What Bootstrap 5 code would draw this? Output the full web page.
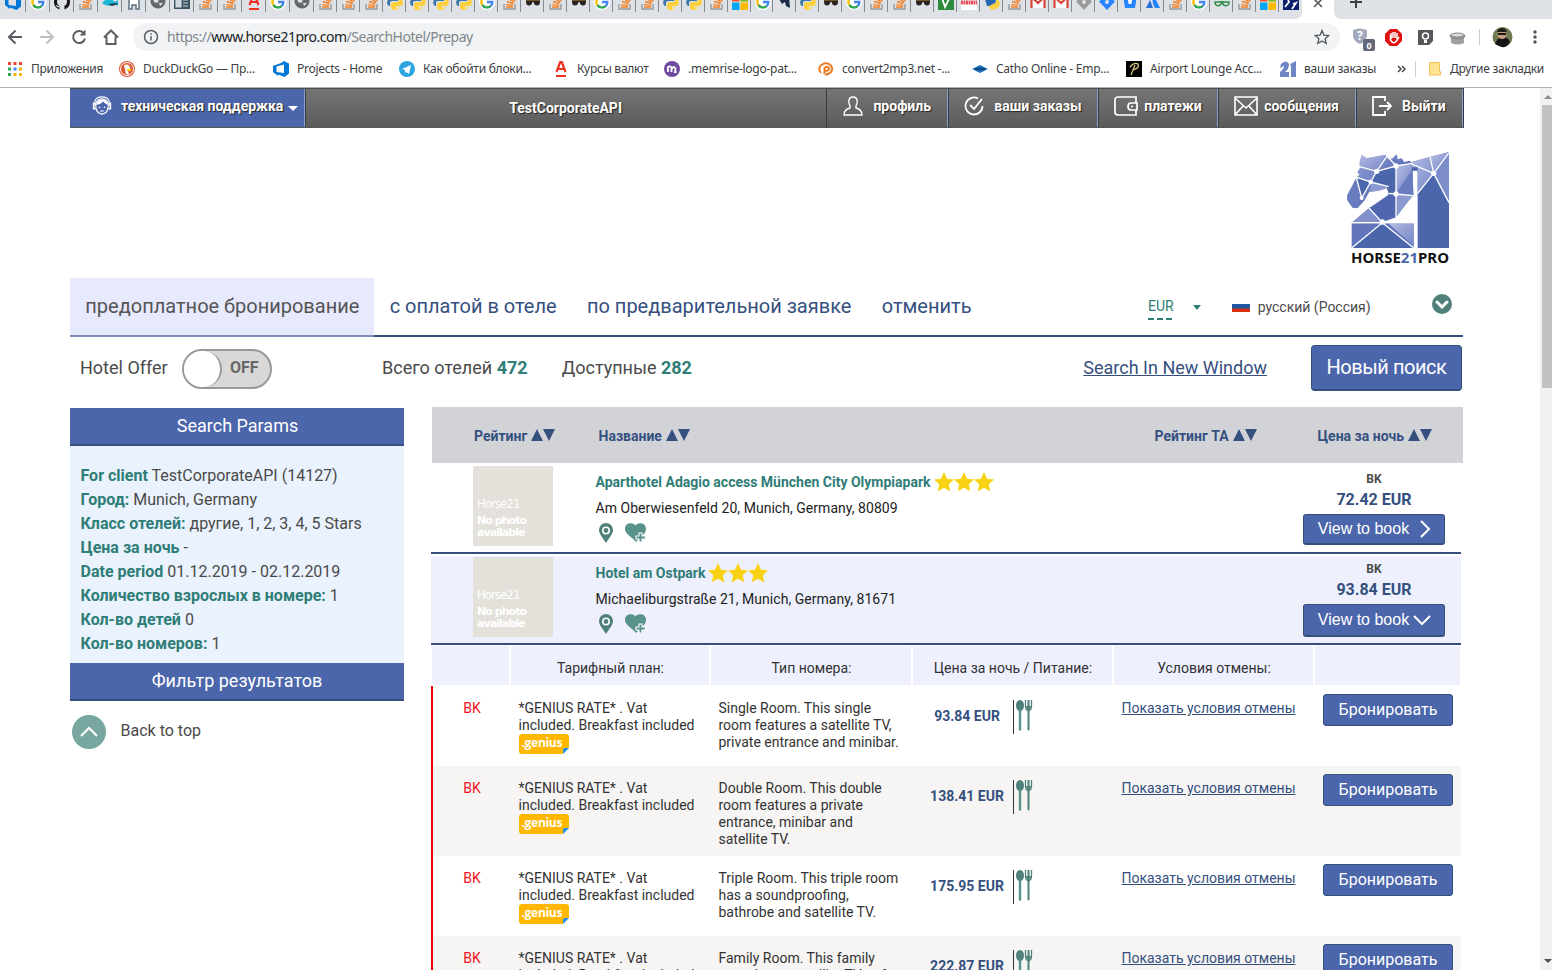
<!DOCTYPE html>
<html lang="ru">
<head>
<meta charset="utf-8">
<title>Horse21Pro</title>
<link href="https://cdn.jsdelivr.net/npm/bootstrap@5.3.0/dist/css/bootstrap.min.css" rel="stylesheet">
<style>
html,body{height:970px;overflow:hidden}
body{font-family:Roboto,"Liberation Sans",sans-serif;font-size:16px;color:#4a4a4a;background:#fff;line-height:24px}
svg{display:block;flex:none}
a{color:#35507f}
/* browser chrome */
.chrome{height:88px;border-bottom:1px solid #b1b2b4;font-family:"Noto Sans","Open Sans",sans-serif;color:#3c4043}
.strip{height:19px;background:#fff;overflow:hidden}
.tabs-bg{width:1302px;background:#dee1e6;border-bottom-right-radius:7px}
.rest-bg{background:#dee1e6;border-bottom-left-radius:7px;padding-left:15px}
.tb{width:23px;height:19px;overflow:hidden}
.tb.w{width:24px}
.tb svg{margin:-6px 0 0 4px}
.tb i{width:1px;height:12px;background:#85888c;margin-left:auto}
.tool{height:37px;padding:0 8px 1px 7px}
.omni{height:28px;width:1207px;border-radius:14px;background:#f1f3f4;margin-left:13px;padding:0 10px;font-size:14px}
.url{color:#80868b;letter-spacing:-.5px;margin-left:8px}
.url b{font-weight:400;color:#202124}
.marks{height:31px;font-size:12px;padding:0 0 5px 7px}
.bm{width:var(--w);gap:8px;white-space:nowrap;letter-spacing:-.26px}
/* page */
.view{height:882px}
.sbar{width:12px;background:#f1f1f1;padding:6px 0 5px 2px}
.thumb{height:283px;background:#c1c1c1;margin-top:5px}
.page-col{width:1393px;margin-left:70px}
.topnav{height:40px;width:1394px;background:linear-gradient(#757575,#5b5b5b);border-top:1px solid #4b4b4b;border-bottom:1px solid #565656;color:#fff;font-weight:700;font-size:14px;text-shadow:1px 1px 1px #222}
.topnav>div{border-right:1px solid #3a3a3a;height:38px}
.topnav span{margin-top:-4px}
.topnav .lit{box-shadow:inset -1px 0 #86a0d8}
.support{width:236px;background:#4c66ac;padding-left:22px}
.caret-d{border:5px solid transparent;border-top-color:#fff;border-bottom:0}
.logo-row{height:150px}
.menu{height:59px;border-bottom:2px solid #35507f;font-size:20px;color:#35507f}
.menu .it{height:59px;padding:0 15px 0 15.3px;line-height:56px;white-space:nowrap}
.menu .it.on{background:#e7eafc;color:#555;border-bottom:2px solid #7f8abf}
.teal{color:#2f7d77}
.eur{font-size:14px;color:#2f7d77;height:26px;background:repeating-linear-gradient(90deg,#2f7d77 0 6px,transparent 6px 9px) bottom/100% 2px no-repeat}
.tog{width:90px;height:40px;border:2px solid #999;border-radius:20px;background:#dad8d6;font-weight:700;color:#666;font-size:16px}
.tog i{width:38px;height:36px;border-radius:18px;background:#fff;border-right:2px solid #999}
.stat{height:70px;font-size:18px}
.hbtn{background:#4c66ac;border:1px solid #35507f;border-bottom-width:2px;color:#fff;border-radius:3px;display:flex;align-items:center;justify-content:center}
.side{width:334px}
.sh{height:38px;background:#4c66ac;border-bottom:2px solid #35507f;color:#fff;font-size:18px;line-height:36px;text-align:center}
.sb{height:217px;background:#eaf2fd;padding:18px 10px 0 10.5px;color:#4a4a4a}
.sb b{color:#2f7d77;font-weight:700}
.res{width:1032px;margin-left:27px}
.rh{height:56px;width:1031px;margin-left:1px;background:#d1d3d7;color:#35507f;font-size:14px;font-weight:700}
.rh>div{display:flex;gap:4px;align-items:center;height:58px}
.hotel{height:91px;width:1030px;border-bottom:2px solid #35507f;font-size:14px}
.hotel.sel{background:#eef0fd;border-top:2px solid #fff}
.ph{width:80px;height:80px;background:#e3e1da;color:#fff;padding:32px 0 0 4px}
.ph span{display:block;font:400 11.5px/13px "DejaVu Sans",sans-serif;margin-bottom:4px;letter-spacing:-.8px}
.ph b{display:block;font:800 11px/12px "DejaVu Sans",sans-serif;letter-spacing:-.95px}
.rooms{font-size:14px;line-height:17px;color:#333}
.rg{display:grid;grid-template-columns:77px 198px 200px 199px 199px 145px;column-gap:2px;margin:1px 0 1px 1px}
.rg>div{height:39px;background:#eef0fd;text-align:center;line-height:44px;padding-left:1px}
.rr{display:grid;grid-template-columns:78px 200px 201px 202px 200px 147px;width:1030px;border-left:2px solid #e8000d;height:80px;padding-top:14px}
.rr.alt{background:#f6f5f3}
.rr.tall{height:90px}
.rr .pr{color:#35507f;font-weight:700}
.gen{width:50px;height:20px;background:#ffb700;border-radius:3px;color:#fff;font:700 12px/18px "Open Sans",sans-serif;letter-spacing:-.3px;padding-left:3px;position:relative}
.gen::after{content:"";position:absolute;right:0;bottom:0;border:3px solid #fff;border-top-color:#1a8ff0;border-left-color:#1a8ff0;border-top-left-radius:3px}
.rr.alt .gen::after{border-right-color:#f6f5f3;border-bottom-color:#f6f5f3}
</style>
</head>
<body>
<svg width="0" height="0" class="position-absolute">
<symbol id="so" viewBox="0 0 16 16"><path d="M2 10v5h11v-5" fill="none" stroke="#999" stroke-width="1.4"/><path d="M4 13h7M4.200 10.600l7 .8M5 7.500l6.500 2M6.500 4.500l5.800 3.600M9 1.500l4.300 5.500" stroke="#f48024" stroke-width="1.400"/></symbol>
<symbol id="gg" viewBox="0 0 16 16"><circle cx="8" cy="8" r="8" fill="#fff"/><path d="M3.500 5A5.500 5.500 0 0 1 12 4" fill="none" stroke="#ea4335" stroke-width="2.300"/><path d="M3.300 5a5.500 5.500 0 0 0 0 6" fill="none" stroke="#fbbc05" stroke-width="2.300"/><path d="M3.300 11a5.500 5.500 0 0 0 8.500.9" fill="none" stroke="#34a853" stroke-width="2.300"/><path d="M8 8h5.400a5.500 5.500 0 0 1-1.700 4" fill="none" stroke="#4285f4" stroke-width="2.300"/></symbol>
<symbol id="py" viewBox="0 0 16 16"><path d="M4 0h7v7H5a2 2 0 0 0-2 2v3H2c-3-2-2-6 0-7h6z" fill="#3b77a8"/><path d="M12 4h2c3 3 2 7 0 8H9v1h3c0 4-7 4-8 1v-3a3 3 0 0 1 3-3h3a2 2 0 0 0 2-2z" fill="#fcd03f"/><circle cx="10" cy="14" r=".8" fill="#fff"/></symbol>
<symbol id="pb" viewBox="0 0 16 16"><path d="M0 2h10l2 4-1 6H3z" fill="#2765b5"/><path d="M14 5c3 3 2 8-1 9-3 3-8 2-8-2l6-3z" fill="#fcd03f"/></symbol>
<symbol id="az" viewBox="0 0 16 16"><path d="M11 0l5 2.500v10L11.500 16 5 13.500V15L0 11V5l8-3zM3.500 5.500v5.500L11 12V3.500z" fill="#0078d7" fill-rule="evenodd"/></symbol>
<symbol id="gh" viewBox="0 0 16 16"><path d="M8 0a8 8 0 0 0-2.500 15.600V13C3 14 2 12 2 11c2 0 2 2 4 1-3-1-4-5-2-7 0-1 0-2 .3-2.300L6.500 4h3l2.200-1.300C12 3 12 4 12 5c2 2 1 6-2 7 .5.5.5 1 .5 3.600A8 8 0 0 0 8 0z" fill="#191717"/></symbol>
<symbol id="fi" viewBox="0 0 16 16"><path d="M0 9c4-5 9-5 13-1l3-2v6l-4-2c-5 3-8 2-12-1z" fill="#1db8d8"/><path d="M6 10l9-1 1 1-6 2z" fill="#173e50"/></symbol>
<symbol id="ho" viewBox="0 0 16 16"><path d="M3 15V7c0-6 10-6 10 0v8h-3v-4H6v4z" fill="#fff" stroke="#5b7080" stroke-width="1.500"/></symbol>
<symbol id="gl" viewBox="0 0 16 16"><circle cx="8" cy="7" r="7.500" fill="#65676b"/><path d="M3 5h4l2 2-2 2-3-1zM9 9h4l-3 3z" fill="#dee1e6"/></symbol>
<symbol id="nw" viewBox="0 0 16 16"><path d="M0 0h16v15H0z" fill="#3b5261"/><path d="M2 1h5v12H2zM9 3h5M9 6h5M9 9h5M9 12h5" fill="#cfd8dc" stroke="#cfd8dc" stroke-width="1.200"/></symbol>
<symbol id="al" viewBox="0 0 16 16"><path d="M3.500 11L7.200 1h1.600l3.700 10M5 8h6" fill="none" stroke="#ef3124" stroke-width="2.200"/><path d="M3 14h10v2H3z" fill="#ef3124"/></symbol>
<symbol id="gs" viewBox="0 0 16 16"><path d="M1 6h14v2l-.5 2.500q-2.500 2-5 0L8.500 8h-1l-1 2.500q-2.500 2-5 0L1 8z" fill="#262321"/><path d="M1 5.800h14" stroke="#e6a43b" stroke-width="1.200"/></symbol>
<symbol id="ms" viewBox="0 0 16 16"><path d="M0 0h7.500v7.500H0z" fill="#f35325"/><path d="M8.500 0H16v7.500H8.500z" fill="#81bc06"/><path d="M0 8.500h7.500V16H0z" fill="#05a6f0"/><path d="M8.500 8.500H16V16H8.500z" fill="#ffba08"/></symbol>
<symbol id="dk" viewBox="0 0 16 16"><path d="M2 5l10-3 1 12-4-2-1-4-3 2z" fill="#1d2d44"/></symbol>
<symbol id="vv" viewBox="0 0 16 16"><path d="M0 0h16v16H0z" fill="#2e8b3e"/><path d="M4 4l3 9 5-10" fill="none" stroke="#fff" stroke-width="1.800"/></symbol>
<symbol id="rd" viewBox="0 0 16 16"><path d="M0 0h16v16H0z" fill="#fff"/><path d="M0 7.500h16M0 9.500h16" stroke="#e3505a" stroke-width="1.800" stroke-dasharray="2 .5"/></symbol>
<symbol id="gm" viewBox="0 0 16 16"><path d="M1 2h14v12H1z" fill="#fff"/><path d="M1.500 14V3L8 9l6.500-6v11" fill="none" stroke="#d8463a" stroke-width="2.200"/></symbol>
<symbol id="ji" viewBox="0 0 16 16"><path d="M8 0l8 7.500L8 16 0 7.500z"/><circle cx="8" cy="8" r="2" fill="#dee1e6"/></symbol>
<symbol id="bb" viewBox="0 0 16 16"><path d="M1 1h14l-2 13H3z" fill="#2684ff"/><path d="M6 6h4l-.6 4H6.600z" fill="#fff"/></symbol>
<symbol id="at" viewBox="0 0 16 16"><path d="M5 6l3 8H1z" fill="#2670d8"/><path d="M8 0l7 14h-5Q6 8 8 0z" fill="#2684ff"/></symbol>
<symbol id="gf" viewBox="0 0 16 16"><path d="M7 8H1a3.200 3.200 0 1 0 6-1M9 8h6a3.200 3.200 0 1 1-6-1M5 8h6" fill="none" stroke="#2f8d46" stroke-width="1.500"/></symbol>
<symbol id="nv" viewBox="0 0 16 16"><path d="M0 0h16v16H0z" fill="#0b1f6b"/><path d="M2 13l4-5-1-2M9 15l4-6-3 1" fill="none" stroke="#fff" stroke-width="1.800"/></symbol>
<symbol id="star" viewBox="0 0 20 20"><path d="M10 0l3 6.700 7 .8-5.200 4.800 1.400 7-6.200-3.600-6.200 3.600 1.400-7L0 7.500l7-.8z" fill="#f9d313"/></symbol>
<symbol id="pin" viewBox="0 0 14 20"><path d="M7 0a7 7 0 0 1 7 7c0 4-4 8-7 13C4 15 0 11 0 7a7 7 0 0 1 7-7z" fill="#50807a"/><circle cx="7" cy="7.500" r="3.200" fill="none" stroke="#fff" stroke-width="1.600"/></symbol>
<symbol id="heart" viewBox="0 0 22 20"><path d="M10.500 2.500C13-1 21-.5 21 6c0 5-6 8-10 13C7 14 0 11 0 6-.0-.5 8-1 10.500 2.500z" fill="#58938b"/><path d="M14 10h3v3h3.500v3H17v3h-3v-3h-3v-3h3z" fill="#58938b" stroke="#fff" stroke-width="1.100"/></symbol>
<symbol id="meal" viewBox="0 0 20 34"><path d="M.5 0v34" stroke="#333"/><ellipse cx="7" cy="5.500" rx="4" ry="5.500" fill="#50807a"/><path d="M7 10v19.500" stroke="#58938b" stroke-width="2.400" stroke-linecap="round"/><path d="M12.500 0v6q0 4 3 5 3-1 3-5V0" fill="none" stroke="#50807a" stroke-width="1.300"/><path d="M15.500 0v29.500" stroke="#50807a" stroke-width="2" stroke-linecap="round"/><path d="M12.500 6h6l-3 5z" fill="#50807a"/></symbol>
<symbol id="ud" viewBox="0 0 24 12"><path d="M0 12L6 0l6 12zM12 0h12l-6 12z" fill="#35507f"/></symbol>
</svg>

<div class="chrome">
 <div class="strip d-flex">
  <div class="tabs-bg d-flex" id="tabs"></div>
  <div style="width:32px" class="d-flex justify-content-center"><svg width="10" height="10" viewBox="0 0 10 10" style="margin-top:-2px"><path d="M1 1l8 8M9 1L1 9" stroke="#55585c" stroke-width="1.600"/></svg></div>
  <div class="rest-bg flex-fill"><svg width="14" height="14" viewBox="0 0 14 14" style="margin-top:-5px"><path d="M7 1v12M1 7h12" stroke="#3c4043" stroke-width="2"/></svg></div>
 </div>
 <div class="tool d-flex align-items-center">
  <svg width="113" height="18" viewBox="0 0 113 18" style="margin-bottom:1px" fill="none" stroke="#5a5d61" stroke-width="2"><path d="M15 9H2M8.500 2.500L2 9l6.500 6.500"/><path d="M33 9h13M39.500 2.500L46 9l-6.500 6.500" stroke="#bcbec1"/><path d="M77 5.500A6 6 0 1 0 78 10.500"/><path d="M78.500 1.500v6h-6z" fill="#5a5d61" stroke="none"/><path d="M99.500 8.500V16h9V8.500M97 9.500L104 2.500l7 7" /></svg>
  <div class="omni d-flex align-items-center"><svg width="16" height="16" viewBox="0 0 16 16" fill="none" stroke="#5a5d61" stroke-width="1.500"><circle cx="8" cy="8" r="6.500"/><path d="M8 7v4.500M8 4.300v1.500"/></svg><span class="url">https://<b>www.horse21pro.com</b>/SearchHotel/Prepay</span>
  <svg class="ms-auto" width="16" height="16" viewBox="0 0 16 16"><path d="M8 1.500l1.900 4.600 4.900.4-3.700 3.200 1.100 4.800L8 12l-4.200 2.500 1.100-4.800L1.200 6.500l4.900-.4z" fill="none" stroke="#55585c" stroke-width="1.300"/></svg></div>
  <svg class="ms-auto" width="193" height="30" viewBox="-1 -2 193 30"><path d="M1 6q7-3 14 0v6q-2 6-7 8-6-2-7-8z" fill="#a3aabb"/><text x="5" y="16" font-size="12" font-weight="700" fill="#fff">?</text><rect x="11" y="15" width="12" height="12" rx="2" fill="#63677a"/><text x="14.500" y="24.500" font-size="9" font-weight="700" fill="#fff">0</text><path d="M38 5h7l5 5v7l-5 5h-7l-5-5v-7z" fill="#e0100f"/><path d="M38.500 11v5q3 5 6 1l2.500-4" stroke="#fff" stroke-width="1.500" fill="none"/><path d="M39 15V9M41 14V8M43 14V8M45 15V9" stroke="#fff" stroke-width="1.500"/><path d="M66 6h15v11l-4 4H66z" fill="#55575a"/><circle cx="73.500" cy="12" r="3" fill="none" stroke="#fff" stroke-width="1.500"/><path d="M72 16h3v3h-3z" fill="#fff"/><path d="M99 12h13v7q-6 3-13 0z" fill="#a0a0a0"/><ellipse cx="105.500" cy="12" rx="8" ry="3.500" fill="#8f8f8f"/><ellipse cx="105.500" cy="11" rx="6" ry="1.500" fill="#ddd"/><path d="M127.500 5v16" stroke="#c9cbce"/><circle cx="150.500" cy="13" r="10" fill="#6d7a52"/><path d="M143 20q2-6 7-7 6 0 8 5-3 6-8 5z" fill="#161616"/><circle cx="150" cy="10.500" r="4.500" fill="#c99b83"/><path d="M145 8q1-4 5-4 4 0 5 4l-2 0z" fill="#221f1d"/><path d="M146 10h8" stroke="#151515" stroke-width="2"/><g fill="#505357"><circle cx="183" cy="8" r="1.700"/><circle cx="183" cy="13" r="1.700"/><circle cx="183" cy="18" r="1.700"/></g></svg>
 </div>
 <div class="marks d-flex align-items-center">
  <div class="bm d-flex align-items-center" style="--w:112px"><svg width="16" height="16" viewBox="0 0 16 16"><path d="M1 1h3v3H1zM6.500 1h3v3h-3zM12 1h3v3h-3z" fill="#ea4335"/><path d="M1 6.500h3v3H1zM1 12h3v3H1z" fill="#34a853"/><path d="M6.500 6.500h3v3h-3z" fill="#4285f4"/><path d="M12 6.500h3v3h-3zM6.500 12h3v3h-3zM12 12h3v3h-3z" fill="#f9b406"/></svg>Приложения</div>
  <div class="bm d-flex align-items-center" style="--w:154px"><svg width="16" height="16" viewBox="0 0 16 16"><circle cx="8" cy="8" r="8" fill="#de5833"/><circle cx="8" cy="8" r="6.500" fill="none" stroke="#fff"/><path d="M5 4q6-2 6 4l-2 1 1 5-3-1z" fill="#fff"/><path d="M8 8h4v2H8z" fill="#fdd20a"/></svg>DuckDuckGo — Пр...</div>
  <div class="bm d-flex align-items-center" style="--w:126px"><svg width="16" height="16"><use href="#az"/></svg>Projects - Home</div>
  <div class="bm d-flex align-items-center" style="--w:154px"><svg width="16" height="16" viewBox="0 0 16 16"><circle cx="8" cy="8" r="8" fill="#2ca5e0"/><path d="M3 8l9-4-2 9-3-2-1 1V9z" fill="#fff"/></svg>Как обойти блоки...</div>
  <div class="bm d-flex align-items-center" style="--w:111px"><svg width="16" height="16"><use href="#al"/></svg>Курсы валют</div>
  <div class="bm d-flex align-items-center" style="--w:154px"><svg width="16" height="16" viewBox="0 0 16 16"><circle cx="8" cy="8" r="8" fill="#714ba0"/><path d="M4 11V6q3-1.500 3.500 1V11M7.500 8q3-4 4 0l-.5 3h1.500" fill="none" stroke="#fff" stroke-width="1.800"/></svg>.memrise-logo-pat...</div>
  <div class="bm d-flex align-items-center" style="--w:154px"><svg width="16" height="16" viewBox="0 0 16 16" fill="none" stroke="#ee7a22" stroke-width="2"><path d="M3 12Q-1 7 4 3.500q5-3 9 1 3 5-2 8-3 1.500-4 1"/><path d="M6.500 13V7q3-2.500 4.500 0 0 3-4 3"/></svg>convert2mp3.net -...</div>
  <div class="bm d-flex align-items-center" style="--w:154px"><svg width="16" height="16" viewBox="0 0 16 16"><path d="M0 8l8-4 8 4-8 4z" fill="#1a6db5"/><path d="M3 8h10" stroke="#0a4a85" stroke-width="2"/></svg>Catho Online - Emp...</div>
  <div class="bm d-flex align-items-center" style="--w:154px"><svg width="16" height="16" viewBox="0 0 16 16"><path d="M0 0h16v16H0z"/><path d="M5 14l4-10M4 6q4-5 8-3 2 4-5 6" fill="none" stroke="#d8c67e" stroke-width="1.300"/></svg>Airport Lounge Acc...</div>
  <div class="bm d-flex align-items-center" style="--w:117px"><svg width="16" height="16" viewBox="0 0 16 16"><path d="M1 3q5-5 8 0 0 5-4 8h4v5H0v-5q4-3 4-6L0 7zM10 3l6-3v16h-5V5z" fill="#6f85c6"/></svg>ваши заказы</div>
  <svg width="9" height="8" viewBox="0 0 9 8"><path d="M1 1l3 3-3 3M5 1l3 3-3 3" fill="none" stroke="#45484c" stroke-width="1.500"/></svg>
  <div style="width:1px;height:16px;background:#cdcfd2;margin:0 12px 0 9px"></div>
  <div class="bm d-flex align-items-center" style="--w:116px"><svg width="14" height="16" viewBox="0 0 14 16"><path d="M1.500 1.500h10v9h1V14h-11z" fill="#ffe391" stroke="#ecc456"/></svg>Другие закладки</div>
 </div>
</div>

<div class="view d-flex overflow-hidden">
<main class="page-col">
 <div class="topnav d-flex">
  <div class="support lit d-flex align-items-center"><svg width="20" height="20" viewBox="0 0 20 22" fill="none" stroke="#fff" stroke-width="1.300" style="margin:-5px 9px 0 0"><path d="M2 10Q1 1 10 1t8 9"/><path d="M2 8H.8v6H3M18 8h1.200v6H17" stroke-width="1.800"/><path d="M3 10q0-6 7-7 7 1 7 7 0 9-7 10-7-1-7-10z"/><path d="M3.500 10q5-1 8-4 2 3 5 3.500Q16 4 10 3.500 4 4 3.500 10z" fill="#fff" stroke="none"/><path d="M6.500 12.500h1.500M12 12.500h1.500M8 16.500h4"/></svg><span>техническая поддержка</span><i class="caret-d" style="margin-left:5px;margin-top:1px"></i></div>
  <div style="width:522px;line-height:39px;padding-right:1px" class="text-center">TestCorporateAPI</div>
  <div class="lit d-flex align-items-center" style="width:122px;padding-left:16px"><svg width="20" height="20" viewBox="0 0 20 20" style="margin:-5px 10px 0 0" fill="none" stroke="#fff" stroke-width="1.400"><path d="M10 1c5 0 5 6 3 9v2c4 1 6 3 6 7H1c0-4 2-6 6-7v-2C5 7 5 1 10 1z"/></svg><span>профиль</span></div>
  <div class="lit d-flex align-items-center" style="width:150px;padding-left:15px"><svg width="20" height="20" viewBox="0 0 20 20" style="margin:-5px 10px 0 0" fill="none" stroke="#fff" stroke-width="1.800"><path d="M14 2.500A8.500 8.500 0 1 0 18.500 10"/><path d="M6 9l4 4 8-10"/></svg><span>ваши заказы</span></div>
  <div class="lit d-flex align-items-center" style="width:120px;padding-left:15px"><svg width="24" height="20" viewBox="0 0 24 20" style="margin:-5px 6px 0 0" fill="none" stroke="#fff" stroke-width="1.700"><path d="M22 7V1H4Q1 1 1 4v12q0 3 3 3h18v-5"/><path d="M23 7h-6q-3 0-3 3.500t3 3.500h6zM17 10.500h2"/></svg><span>платежи</span></div>
  <div class="lit d-flex align-items-center" style="width:138px;padding-left:15px"><svg width="24" height="20" viewBox="0 0 24 20" style="margin:-5px 6px 0 0" fill="none" stroke="#fff" stroke-width="1.600"><path d="M1 1h22v18H1zM1 2l11 10L23 2M1 19l8-9M23 19l-8-9"/></svg><span>сообщения</span></div>
  <div class="lit d-flex align-items-center" style="width:107px;padding-left:15px"><svg width="20" height="20" viewBox="0 0 20 20" style="margin:-5px 10px 0 0" fill="none" stroke="#fff" stroke-width="1.800"><path d="M13 5V1H1v18h12v-4M7 10h12M15 6l4 4-4 4"/></svg><span>Выйти</span></div>
 </div>
 <div class="logo-row d-flex justify-content-end">
  <svg width="140" height="130" viewBox="0 0 420 390" style="margin:12px -7px 0 0">
   <defs><linearGradient id="lg" x1="0" y1="0" x2="1" y2="1"><stop offset="0" stop-color="#a3aedb"/><stop offset=".5" stop-color="#5d72b9"/><stop offset="1" stop-color="#7f8fcc"/></linearGradient>
   <linearGradient id="lh" x1="0" y1="0" x2="1" y2="1"><stop offset="0" stop-color="#b4bde3"/><stop offset="1" stop-color="#7383c6"/></linearGradient></defs>
   <path d="M65 248l53-44 48-26 10-16-6-22-10-3-14 14-28 4-14 26-22 24-14-2-16-22v-15l28-54 8-8-6-7 10-17-4-12 7-23 15 10 58-11 8 14 12-3 12-13 3 16 12-3 7 11 18-4 8 13 2 90-28 35-22 28-30 10-14 4z" fill="url(#lg)"/>
   <path d="M88 80l7-35 15 10 58-11-28 50z" fill="url(#lh)"/>
   <path d="M92 104l48-10-18 32z" fill="#7b8bca"/>
   <path d="M122 126l53 14-8 6-20 6-26 4z" fill="#8c9ad2"/>
   <path d="M52 166l28-54 10 36 5 26-14 30-14-2-15-22z" fill="#6a7cc0"/><path d="M80 112l42 14-27 48z" fill="#4c66ac"/>
   <path d="M140 94l58-16v84l-22-2-6-20-48-14z" fill="#4c66ac"/>
   <path d="M198 78l48-8 4 95-52-3z" fill="url(#lh)"/><path d="M204 150l42-60 4 75-46-3z" fill="#6a7cc0"/>
   <path d="M198 162l50 5-26 33-22 30z" fill="#8c9ad2"/>
   <path d="M176 164l22-2v70l-40 14-40-42z" fill="#5067af"/>
   <path d="M65 248l53-44 40 42z" fill="#8290cc"/>
   <path d="M65 250h186v74H65z" fill="#6376bd"/><path d="M65 324l92-76 94 76z" fill="#4c66ac"/><path d="M175 250h76v68z" fill="url(#lh)"/>
   <path d="M245 66l112-30v288h-94V92h-18z" fill="#4c66ac"/><path d="M245 66l56-16 10 50-48 60V82h-18z" fill="url(#lh)"/><path d="M311 100l46-62v150z" fill="#7d8ccb"/><path d="M301 50l56-13-46 63z" fill="url(#lh)"/>
   <path d="M88 80l52 14 34-50M140 94l58-16 48-8M198 78V232M198 78l-30-34M80 112l42 14 18-32M122 126l-27 48-16-62M122 126l54 14M198 162l50 5M176 160l22 2M65 248h190M117 204l40 44-92 76M157 248l94 76M245 72l66 28 46-62M311 100l-48 60M311 100l46 88M311 100L300 50" fill="none" stroke="#fff" stroke-width="4"/>
   <g fill="#fff"><circle cx="140" cy="94" r="8"/><circle cx="198" cy="78" r="8"/><circle cx="122" cy="126" r="7"/><circle cx="198" cy="162" r="8"/><circle cx="95" cy="174" r="6"/><circle cx="157" cy="246" r="8"/><circle cx="311" cy="100" r="8"/></g>
   <text x="63" y="368" font-family="Noto Sans,sans-serif" font-weight="700" font-size="42" fill="#111" textLength="294" lengthAdjust="spacingAndGlyphs">HORSE<tspan fill="#4c66ac">21</tspan>PRO</text>
  </svg>
 </div>
 <div class="menu d-flex">
  <div class="it on">предоплатное бронирование</div><div class="it">с оплатой в отеле</div><div class="it">по предварительной заявке</div><div class="it">отменить</div>
  <div class="d-flex ms-auto align-items-start" style="width:315px;padding-top:16px">
   <span class="eur">EUR</span><i class="caret-d" style="margin:11px 0 0 19px;border-top-color:#2f7d77;border-width:5px 4.500px 0"></i>
   <svg width="18" height="11" viewBox="0 0 18 11" style="margin:7px 8px 0 31px"><path d="M0 3h18v5H0z" fill="#1f559e"/><path d="M0 7.500h18v3.500H0z" fill="#d5300f"/></svg>
   <span style="font-size:14px;color:#4a4a4a;margin-top:1px">русский (Россия)</span>
   <svg class="ms-auto" width="20" height="20" viewBox="0 0 20 20" style="margin-right:11px"><circle cx="10" cy="10" r="10" fill="#50807a"/><path d="M5 8l5 5 5-5" fill="none" stroke="#fff" stroke-width="3" stroke-linecap="round"/></svg>
  </div>
 </div>
 <div class="stat d-flex align-items-center" style="padding:0 1px 8px 10px">
  <span style="width:102px">Hotel Offer</span>
  <div class="tog d-flex align-items-center" style="margin-top:2px"><i></i><span style="margin:-2px 0 0 8px">OFF</span></div>
  <span style="margin-left:110px">Всего отелей <b class="teal">472</b></span>
  <span style="margin-left:34px">Доступные <b class="teal">282</b></span>
  <a href="#" class="ms-auto" style="margin-right:44px">Search In New Window</a>
  <div class="hbtn" style="width:151px;height:46px;font-size:20px;letter-spacing:-.45px;border-radius:4px;padding-bottom:2px">Новый поиск</div>
 </div>
 <div class="d-flex align-items-start">
  <aside class="side" style="margin-top:1px">
   <div class="sh" style="padding-left:1px">Search Params</div>
   <div class="sb"><b>For client</b> TestCorporateAPI (14127)<br><b>Город:</b> Munich, Germany<br><b>Класс отелей:</b> другие, 1, 2, 3, 4, 5 Stars<br><b>Цена за ночь</b> -<br><b>Date period</b> 01.12.2019 - 02.12.2019<br><b>Количество взрослых в номере:</b> 1<br><b>Кол-во детей</b> 0<br><b>Кол-во номеров:</b> 1</div>
   <div class="sh">Фильтр результатов</div>
   <div class="d-flex" style="padding:14px 2px"><svg width="34" height="34" viewBox="0 0 34 34"><circle cx="17" cy="17" r="17" fill="#78a79f"/><path d="M9 21l8-8 8 8" fill="none" stroke="#fff" stroke-width="2"/></svg><span style="margin:4px 0 0 14.500px">Back to top</span></div>
  </aside>
  <section class="res">
   <div class="rh d-flex">
    <div style="width:124.500px;margin-left:42px">Рейтинг<svg width="24" height="12" style="margin-top:-2px"><use href="#ud"/></svg></div>
    <div style="width:556px">Название<svg width="24" height="12" style="margin-top:-2px"><use href="#ud"/></svg></div>
    <div style="width:163px">Рейтинг TA<svg width="24" height="12" style="margin-top:-2px"><use href="#ud"/></svg></div>
    <div>Цена за ночь<svg width="24" height="12" style="margin-top:-2px"><use href="#ud"/></svg></div>
   </div>
   <div id="hotels"></div>
   <div class="rooms">
    <div class="rg"><div></div><div>Тарифный план:</div><div>Тип номера:</div><div>Цена за ночь / Питание:</div><div>Условия отмены:</div><div></div></div>
    <div id="rooms"></div>
   </div>
  </section>
 </div>
</main>
<div class="sbar ms-auto"><svg width="10" height="6" viewBox="0 0 10 6"><path d="M2 5l4-4 4 4z" fill="#8a8a8a"/></svg><div class="thumb"></div><svg width="10" height="6" viewBox="0 0 10 6" style="margin-top:570px"><path d="M2 1l4 4 4-4z" fill="#505050"/></svg></div>
</div>

<script src="https://cdn.jsdelivr.net/npm/bootstrap@5.3.0/dist/js/bootstrap.bundle.min.js"></script>
<script>
const ic='az gg gh so fi ho gl nw so so al gg gl so so so py py py py gg so gs so gs gg so so py py so ms gg dk py gs gg so so gs vv rd pb so gm gm ji jb bb at so gg gf so ms nv'.split(' ');
document.getElementById('tabs').innerHTML=ic.map((n,i)=>{
  const f=n=='ji'?'#9b9b9b':'#2684ff', id=n=='jb'?'ji':n;
  return `<div class="tb d-flex ${i<13?'w':''}" ${i==0?'style="padding-left:1px;width:26px"':''}><svg width="16" height="16" fill="${f}"><use href="#${id}"/></svg>${i<55?'<i></i>':''}</div>`}).join('');
const st='<svg width="20" height="20"><use href="#star"/></svg>'.repeat(3);
document.getElementById('hotels').innerHTML=[
 ['Aparthotel Adagio access München City Olympiapark','Am Oberwiesenfeld 20, Munich, Germany, 80809','72.42',0],
 ['Hotel am Ostpark','Michaeliburgstraße 21, Munich, Germany, 81671','93.84',1]
].map(h=>`<div class="hotel d-flex ${h[3]?'sel':''}">
 <div class="ph" style="margin:${h[3]?1:3}px 42.500px 0 42px"><span>Horse21</span><b>No photo<br>available</b></div>
 <div style="padding-top:${h[3]?5:7}px"><div class="d-flex align-items-center fw-bold teal" style="gap:3px">${h[0]}<span class="d-flex" style="margin-top:-1px">${st}</span></div>
 <div style="color:#222;margin-top:2px;letter-spacing:.04px">${h[1]}</div>
 <div class="d-flex" style="gap:12px;padding:3px 0 0 3px"><svg width="14" height="20"><use href="#pin"/></svg><svg width="22" height="20"><use href="#heart"/></svg></div></div>
 <div class="ms-auto text-center" style="width:142px;margin-right:16px;padding-top:${h[3]?1:4}px;font-weight:700"><div style="font-size:12px;line-height:24px">BK</div><div style="font-size:16px;line-height:17px;color:#35507f">${h[2]} EUR</div>
 <div class="hbtn" style="height:${h[3]?33:31}px;margin-top:6px;font-size:16px;font-weight:400;font-family:'Liberation Sans',sans-serif;gap:${h[3]?4:11}px;padding-left:1px">View to book${h[3]?'<svg width="18" height="11" viewBox="0 0 18 11"><path d="M1 1l8 8 8-8" fill="none" stroke="#fff" stroke-width="2"/></svg>':'<svg width="11" height="18" viewBox="0 0 11 18"><path d="M1 1l8 8-8 8" fill="none" stroke="#fff" stroke-width="2"/></svg>'}</div></div></div>`).join('');
document.getElementById('rooms').innerHTML=[
 ['Single Room. This single<br>room features a satellite TV,<br>private entrance and minibar.','93.84'],
 ['Double Room. This double<br>room features a private<br>entrance, minibar and<br>satellite TV.','138.41'],
 ['Triple Room. This triple room<br>has a soundproofing,<br>bathrobe and satellite TV.','175.95'],
 ['Family Room. This family<br>room has a satellite TV, safe','222.87']
].map((r,i)=>`<div class="rr ${i%2?'alt':''} ${i==1?'tall':''}"><div class="text-center" style="color:#f0141e">BK</div>
 <div style="padding-left:7.500px">*GENIUS RATE* . Vat<br>included. Breakfast included<div class="gen">.genius</div></div>
 <div style="padding-left:7.500px">${r[0]}</div>
 <div class="d-flex align-items-start" style="height:34px"><div class="pr text-center" style="width:94px;margin-left:8px;padding-top:8px">${r[1]} EUR</div><svg width="20" height="34" style="margin-left:-1px"><use href="#meal"/></svg></div>
 <div class="text-center" style="padding-right:11px"><a href="#">Показать условия отмены</a></div>
 <div><div class="hbtn" style="width:130px;height:32px;margin:-6px 0 0 9px;font-size:16px;border-bottom-width:1px;padding-bottom:2px">Бронировать</div></div></div>`).join('');
</script>
</body>
</html>
